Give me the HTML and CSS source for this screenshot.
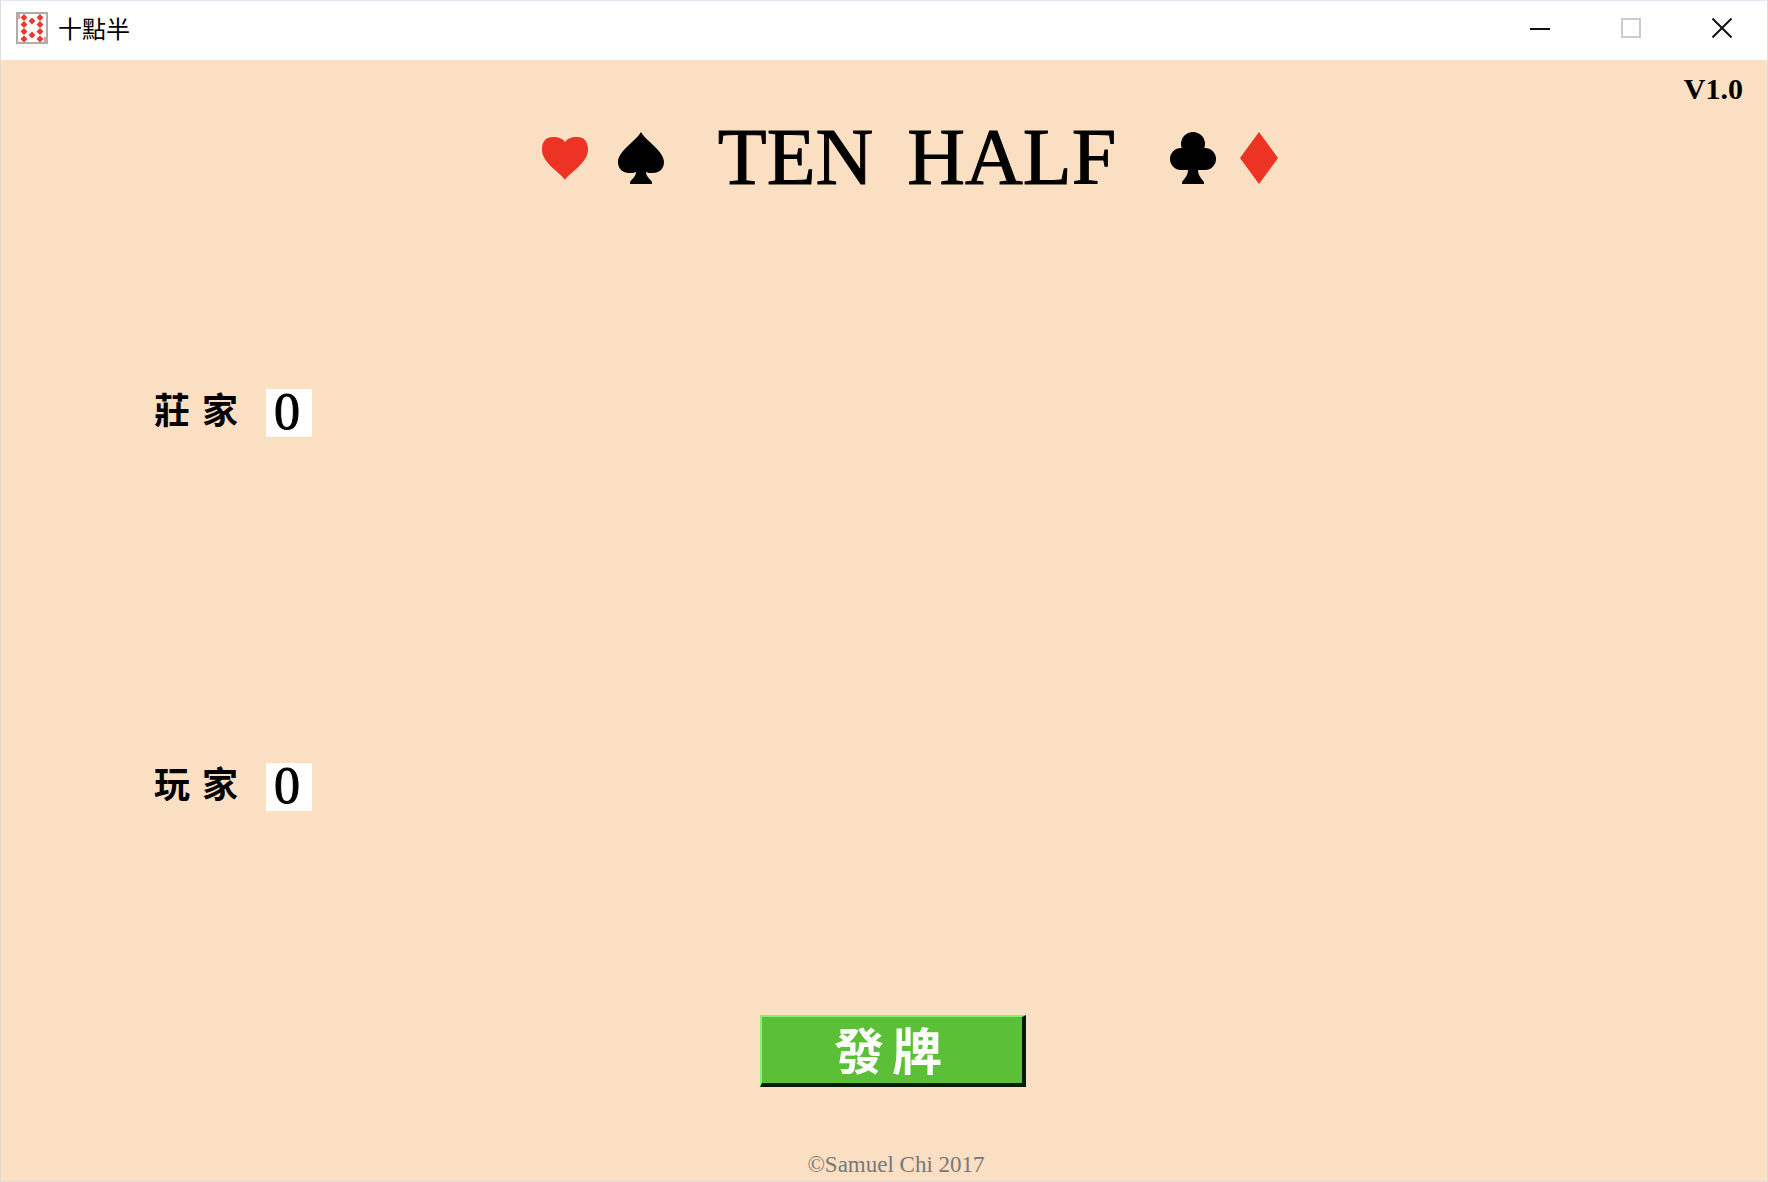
FILE: index.html
```html
<!DOCTYPE html>
<html lang="zh-Hant">
<head>
<meta charset="utf-8">
<meta name="viewport" content="width=device-width, initial-scale=1">
<title>十點半</title>
<link rel="stylesheet" href="styles.css">
</head>
<body>
<div class="window">
  <div class="titlebar">
    <svg class="app-icon" viewBox="0 0 32 32" aria-hidden="true">
      <rect x="1" y="1" width="30" height="30" fill="#fff" stroke="#b0acac" stroke-width="2"/>
      <g fill="#ea3a30">
        <path d="M8 2l3.500 3.500-3.500 3.500-3.500-3.500zM8 9l3.500 3.500-3.500 3.500-3.500-3.500zM8 16l3.500 3.500-3.500 3.500-3.500-3.500zM8 23.500l3.500 3.500-3.500 3.500-3.500-3.500z"/>
        <path d="M24 2l3.500 3.500-3.500 3.500-3.500-3.500zM24 9l3.500 3.500-3.500 3.500-3.500-3.500zM24 16l3.500 3.500-3.500 3.500-3.500-3.500zM24 23.500l3.500 3.500-3.500 3.500-3.500-3.500z"/>
        <path d="M16 5.500l3.500 3.500-3.500 3.500-3.500-3.500zM16 19.500l3.500 3.500-3.500 3.500-3.500-3.500z"/>
      </g>
      <path d="M3 2v5M29 25v5" stroke="#f0958f" stroke-width="2"/>
    </svg>
    <span class="caption">十點半</span>
    <div class="controls">
      <button type="button" aria-label="Minimize"><svg viewBox="0 0 20 20"><path d="M0 11h20" stroke="#111" stroke-width="2"/></svg></button>
      <button type="button" aria-label="Maximize" disabled><svg viewBox="0 0 20 20"><rect x="1" y="1" width="18" height="18" fill="none" stroke="#ccc" stroke-width="2"/></svg></button>
      <button type="button" aria-label="Close"><svg viewBox="0 0 20 20"><path d="M0.500 0.500l19 19M19.500 0.500l-19 19" stroke="#111" stroke-width="2"/></svg></button>
    </div>
  </div>
  <main class="table">
    <p class="version">V1.0</p>
    <header class="banner">
      <div class="suits suits-left">
        <svg class="suit" viewBox="0 0 46 52" aria-hidden="true"><path fill="#ed3323" d="M23 48C20 42 0 31 0 18C0 9 4 5 11 5C17 5 21 7 23 10C25 7 29 5 35 5C42 5 46 9 46 18C46 31 26 42 23 48z"/></svg>
        <svg class="suit" viewBox="0 0 46 52" aria-hidden="true"><path d="M23 0C28 9 46 19 46 30C46 37 41 41 35 41C32 41 30 41 28 40C28 44 31 46 34 50V52H12V50C15 46 18 44 18 40C16 41 14 41 11 41C5 41 0 37 0 30C0 19 18 9 23 0z"/></svg>
      </div>
      <h1><span>TEN</span> <span>HALF</span></h1>
      <div class="suits suits-right">
        <svg class="suit" viewBox="0 0 46 52" aria-hidden="true"><circle cx="23" cy="12" r="12"/><circle cx="11" cy="27" r="11"/><circle cx="35" cy="27" r="11"/><path d="M11 16h24v22h-7c0 5 3 8 6 12v2H12v-2c3-4 6-7 6-12h-7z"/></svg>
        <svg class="suit suit-narrow" viewBox="0 0 38 52" aria-hidden="true"><path fill="#ed3323" d="M19 0L38 26L19 52L0 26z"/></svg>
      </div>
    </header>
    <div class="score dealer">
      <label for="dealer"><span>莊</span><span>家</span></label>
      <output id="dealer">0</output>
    </div>
    <div class="score player">
      <label for="player"><span>玩</span><span>家</span></label>
      <output id="player">0</output>
    </div>
    <button type="button" class="deal"><span>發</span><span>牌</span></button>
    <footer>©Samuel Chi 2017</footer>
  </main>
</div>
</body>
</html>
```
FILE: styles.css
```css
* {
  box-sizing: border-box;
}

body {
  margin: 0;
  color: #000;
  font-family: "Liberation Serif", "Noto Sans CJK TC", serif;
}

.window {
  display: flex;
  flex-direction: column;
  min-height: 100vh;
  border: 1px solid #dfdcd8;
  border-top-color: #dfeaf6;
  background: #fbdfc3;
}

.titlebar {
  display: flex;
  align-items: center;
  height: 59px;
  padding: 0 0 5px 15px;
  background: #fff;
}

.app-icon {
  width: 32px;
  height: 32px;
}

.caption {
  margin-left: 10px;
  font: 24px/32px "Noto Sans CJK TC", sans-serif;
}

.controls {
  display: flex;
  margin-left: auto;
}

.controls button {
  display: grid;
  place-items: center;
  width: 91px;
  height: 54px;
  padding: 0;
  border: 0;
  background: none;
}

.controls svg {
  width: 20px;
  height: 20px;
}

.table {
  display: flex;
  flex: 1;
  flex-direction: column;
}

.version {
  margin: 15px 24px 0 0;
  font-size: 30px;
  font-weight: bold;
  line-height: 28px;
  text-align: right;
}

.banner {
  display: flex;
  align-items: baseline;
  justify-content: center;
  margin-top: 8px;
  padding-left: 52px;
}

.suits {
  display: flex;
  align-items: baseline;
}

.suits-left {
  gap: 30px;
  margin-right: 54px;
}

.suits-right {
  gap: 24px;
  margin-left: 54px;
}

.suit {
  width: 46px;
  height: 52px;
}

.suit-narrow {
  width: 38px;
}

h1 {
  display: flex;
  gap: 34px;
  margin: 0;
  font-size: 80px;
  font-weight: normal;
  line-height: 92px;
  -webkit-text-stroke: 1px #000;
}

.score {
  display: flex;
  gap: 28px;
  padding-left: 153px;
}

.score label {
  display: flex;
  gap: 12px;
  font-size: 36px;
  font-weight: bold;
  line-height: 46px;
}

.score output {
  width: 46px;
  height: 48px;
  padding-right: 4px;
  background: #fff;
  font-size: 52px;
  line-height: 46px;
  text-align: center;
  -webkit-text-stroke: 1px #000;
}

.dealer {
  margin-top: 186px;
}

.player {
  margin-top: 326px;
}

.deal {
  display: flex;
  align-items: center;
  align-self: center;
  justify-content: center;
  gap: 8px;
  width: 266px;
  height: 72px;
  margin: 204px 0 0 18px;
  padding: 0 8px 4px 0;
  border: solid;
  border-width: 2px 4px 4px 2px;
  border-color: #86f26c #0b1a06 #0b1a06 #86f26c;
  background: #5bbf38;
  color: #fff;
  font: bold 50px/60px "Noto Sans CJK TC", sans-serif;
}

footer {
  margin-top: auto;
  padding: 0 0 2px 24px;
  color: #777;
  font-size: 23px;
  line-height: 28px;
  text-align: center;
}
```
